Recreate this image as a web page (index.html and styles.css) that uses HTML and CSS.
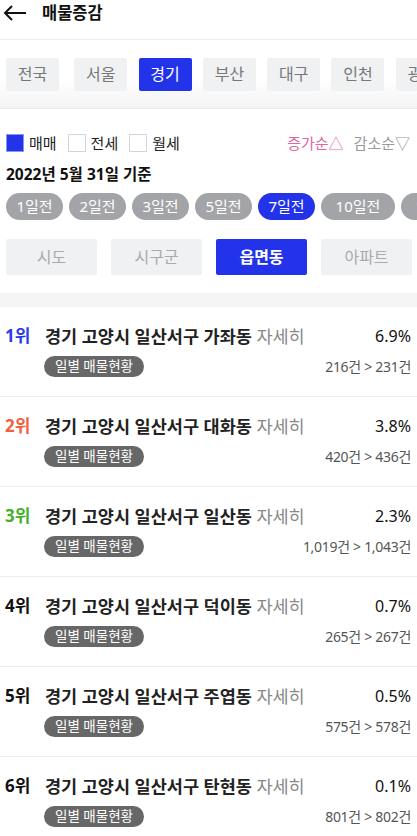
FILE: index.html
```html
<!DOCTYPE html>
<html lang="ko">
<head>
<meta charset="utf-8">
<title>매물증감</title>
<link rel="stylesheet" href="styles.css">
</head>
<body>
<header class="header">
  <svg class="back" width="24" height="16" viewBox="0 0 24 16"><path d="M23 8H2M9 1L2 8l7 7" fill="none" stroke="#111" stroke-width="2"/></svg>
  <h1 class="title">매물증감</h1>
</header>

<nav class="regions">
  <span class="region">전국</span>
  <span class="region">서울</span>
  <span class="region active">경기</span>
  <span class="region">부산</span>
  <span class="region">대구</span>
  <span class="region">인천</span>
  <span class="region">광주</span>
</nav>

<section class="filters">
  <div class="filter-row">
    <label class="check"><span class="box checked"></span>매매</label>
    <label class="check"><span class="box"></span>전세</label>
    <label class="check"><span class="box"></span>월세</label>
    <span class="sort up">증가순△</span>
    <span class="sort down">감소순▽</span>
  </div>
  <div class="date">2022년 5월 31일 기준</div>
  <div class="days">
    <span class="day">1일전</span>
    <span class="day">2일전</span>
    <span class="day">3일전</span>
    <span class="day">5일전</span>
    <span class="day active">7일전</span>
    <span class="day wide">10일전</span>
    <span class="day wide">15일전</span>
  </div>
  <div class="levels">
    <span class="level">시도</span>
    <span class="level">시구군</span>
    <span class="level active">읍면동</span>
    <span class="level">아파트</span>
  </div>
</section>

<div class="band"></div>

<ul class="list">
  <li class="item">
    <div class="row">
      <span class="rank r1">1위</span>
      <span class="name">경기 고양시 일산서구 가좌동 <span class="more">자세히</span></span>
      <span class="pct">6.9%</span>
    </div>
    <div class="row2">
      <span class="daily">일별 매물현황</span>
      <span class="count">216건 &gt; 231건</span>
    </div>
  </li>
  <li class="item">
    <div class="row">
      <span class="rank r2">2위</span>
      <span class="name">경기 고양시 일산서구 대화동 <span class="more">자세히</span></span>
      <span class="pct">3.8%</span>
    </div>
    <div class="row2">
      <span class="daily">일별 매물현황</span>
      <span class="count">420건 &gt; 436건</span>
    </div>
  </li>
  <li class="item">
    <div class="row">
      <span class="rank r3">3위</span>
      <span class="name">경기 고양시 일산서구 일산동 <span class="more">자세히</span></span>
      <span class="pct">2.3%</span>
    </div>
    <div class="row2">
      <span class="daily">일별 매물현황</span>
      <span class="count">1,019건 &gt; 1,043건</span>
    </div>
  </li>
  <li class="item">
    <div class="row">
      <span class="rank">4위</span>
      <span class="name">경기 고양시 일산서구 덕이동 <span class="more">자세히</span></span>
      <span class="pct">0.7%</span>
    </div>
    <div class="row2">
      <span class="daily">일별 매물현황</span>
      <span class="count">265건 &gt; 267건</span>
    </div>
  </li>
  <li class="item">
    <div class="row">
      <span class="rank">5위</span>
      <span class="name">경기 고양시 일산서구 주엽동 <span class="more">자세히</span></span>
      <span class="pct">0.5%</span>
    </div>
    <div class="row2">
      <span class="daily">일별 매물현황</span>
      <span class="count">575건 &gt; 578건</span>
    </div>
  </li>
  <li class="item">
    <div class="row">
      <span class="rank">6위</span>
      <span class="name">경기 고양시 일산서구 탄현동 <span class="more">자세히</span></span>
      <span class="pct">0.1%</span>
    </div>
    <div class="row2">
      <span class="daily">일별 매물현황</span>
      <span class="count">801건 &gt; 802건</span>
    </div>
  </li>
</ul>
</body>
</html>
```

FILE: styles.css
```css
* { box-sizing: border-box; }
html, body { margin: 0; padding: 0; }
body {
  width: 417px;
  height: 836px;
  overflow: hidden;
  background: #fff;
  color: #111;
  font-family: "Noto Sans", "Noto Sans CJK KR", sans-serif;
}

.header {
  height: 40px;
  border-bottom: 1px solid #ececec;
  display: flex;
  align-items: center;
  padding: 0 0 14px 3px;
}
.back { display: block; }
.title {
  margin: 0 0 0 15px;
  font-size: 16.5px;
  font-weight: 700;
  line-height: 22px;
  color: #111;
}

.regions {
  display: flex;
  gap: 11.3px;
  padding: 18px 0 17px 6px;
  overflow: hidden;
  white-space: nowrap;
  background: linear-gradient(to bottom, #fff 0, #fff 55%, #f4f4f4 100%);
  border-bottom: 1px solid #ebebeb;
}
.region {
  flex: none;
  width: 53px;
  height: 33px;
  line-height: 33px;
  text-align: center;
  font-size: 16px;
  color: #777;
  background: #f0f1f3;
  border-radius: 2px;
}
.region:first-child { margin-right: 4px; }
.region.active { background: #2233ea; color: #fff; }

.filters { padding: 25px 0 0 0; }
.filter-row {
  display: flex;
  align-items: center;
  height: 18px;
  padding: 0 7px 0 6px;
}
.check {
  display: flex;
  align-items: center;
  gap: 5px;
  font-size: 15px;
  line-height: 18px;
  color: #222;
  margin-right: 11px;
}
.box {
  width: 18px;
  height: 18px;
  border: 1.5px solid #d2d5de;
  background: #fff;
}
.box.checked { background: #2233ea; border-color: #8d93f2; }
.sort { font-size: 15px; line-height: 18px; }
.sort.up { margin-left: auto; color: #e2659c; margin-right: 10px; }
.sort.down { color: #999; }

.date {
  margin: 12px 0 0 6px;
  font-size: 15.5px;
  font-weight: 700;
  line-height: 20px;
  color: #111;
}

.days {
  display: flex;
  gap: 6px;
  margin-top: 9px;
  padding-left: 6px;
  overflow: hidden;
  white-space: nowrap;
}
.day {
  flex: none;
  width: 57px;
  height: 27px;
  line-height: 27px;
  text-align: center;
  border-radius: 14px;
  background: #a3a4a8;
  color: #fff;
  font-size: 15px;
}
.day.wide { width: 74px; }
.day.active { background: #2233ea; }

.levels {
  display: grid;
  grid-template-columns: repeat(4, 1fr);
  gap: 14px;
  margin-top: 19px;
  padding: 0 5px 0 6px;
}
.level {
  height: 36px;
  line-height: 36px;
  text-align: center;
  font-size: 16px;
  color: #aaa;
  background: #f0f1f3;
  border-radius: 2px;
}
.level.active { background: #2233ea; color: #fff; font-weight: 700; }

.band { height: 14px; margin-top: 18px; background: #f5f5f5; }

.list { list-style: none; margin: 0; padding: 0; }
.item {
  height: 90px;
  padding: 18px 6px 0 5px;
  border-bottom: 1px solid #eeeeee;
}
.row {
  display: flex;
  align-items: center;
  height: 22px;
}
.rank {
  width: 40px;
  font-size: 17px;
  font-weight: 700;
  line-height: 22px;
  color: #111;
}
.rank.r1 { color: #2c3ce6; }
.rank.r2 { color: #f2603e; }
.rank.r3 { color: #44b02c; }
.name {
  font-size: 17.5px;
  font-weight: 700;
  line-height: 22px;
  color: #222;
  white-space: nowrap;
}
.more { font-weight: 400; color: #888; }
.pct {
  margin-left: auto;
  font-size: 16px;
  line-height: 22px;
  color: #111;
}
.row2 {
  display: flex;
  align-items: center;
  margin-top: 9px;
  padding-left: 39px;
}
.daily {
  height: 21px;
  line-height: 21px;
  padding: 0 11px;
  border-radius: 11px;
  background: #676767;
  color: #fff;
  font-size: 13.5px;
}
.count {
  margin-left: auto;
  font-size: 14px;
  color: #555;
  line-height: 21px;
  letter-spacing: -0.3px;
}
```
